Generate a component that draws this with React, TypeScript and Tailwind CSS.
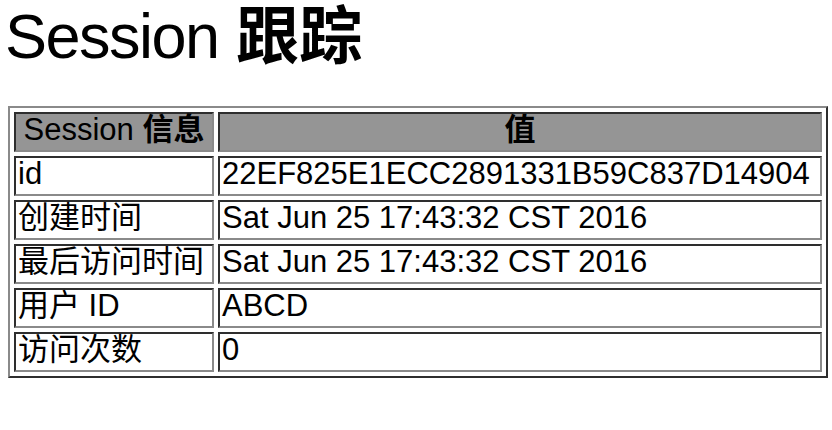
import React from "react";

const FONT = { fontFamily: '"Liberation Sans", "Noto Sans CJK SC", sans-serif' };

const rows: [string, string][] = [
  ["id", "22EF825E1ECC2891331B59C837D14904"],
  ["创建时间", "Sat Jun 25 17:43:32 CST 2016"],
  ["最后访问时间", "Sat Jun 25 17:43:32 CST 2016"],
  ["用户 ID", "ABCD"],
  ["访问次数", "0"],
];

const cell =
  "h-[40px] border-2 border-t-[#2e2e2e] border-l-[#2e2e2e] border-r-[#8a8a8a] border-b-[#8a8a8a] px-[2px] pb-[4px] text-[31px] leading-[32px] text-black whitespace-nowrap";

export default function App() {
  return (
    <div className="w-[832px] h-[430px] bg-white text-black" style={FONT}>
      <h1 className="text-[63px] leading-[72px] font-normal pl-[5px] whitespace-nowrap">
        <span className="tracking-[-1.5px]">Session</span> <span className="font-semibold">跟踪</span>
      </h1>
      <div className="ml-[8px] mt-[34px] w-[820px] border-2 border-t-[#8a8a8a] border-l-[#8a8a8a] border-r-[#2e2e2e] border-b-[#2e2e2e] p-[4px] grid grid-cols-[200px_604px] gap-[4px]">
        <div className={cell + " bg-[#959595] text-center"}>
          Session <span className="font-semibold">信息</span>
        </div>
        <div className={cell + " bg-[#959595] text-center font-semibold"}>值</div>
        {rows.map(([k, v]) => (
          <React.Fragment key={k}>
            <div className={cell}>{k}</div>
            <div className={cell}>{v}</div>
          </React.Fragment>
        ))}
      </div>
    </div>
  );
}
